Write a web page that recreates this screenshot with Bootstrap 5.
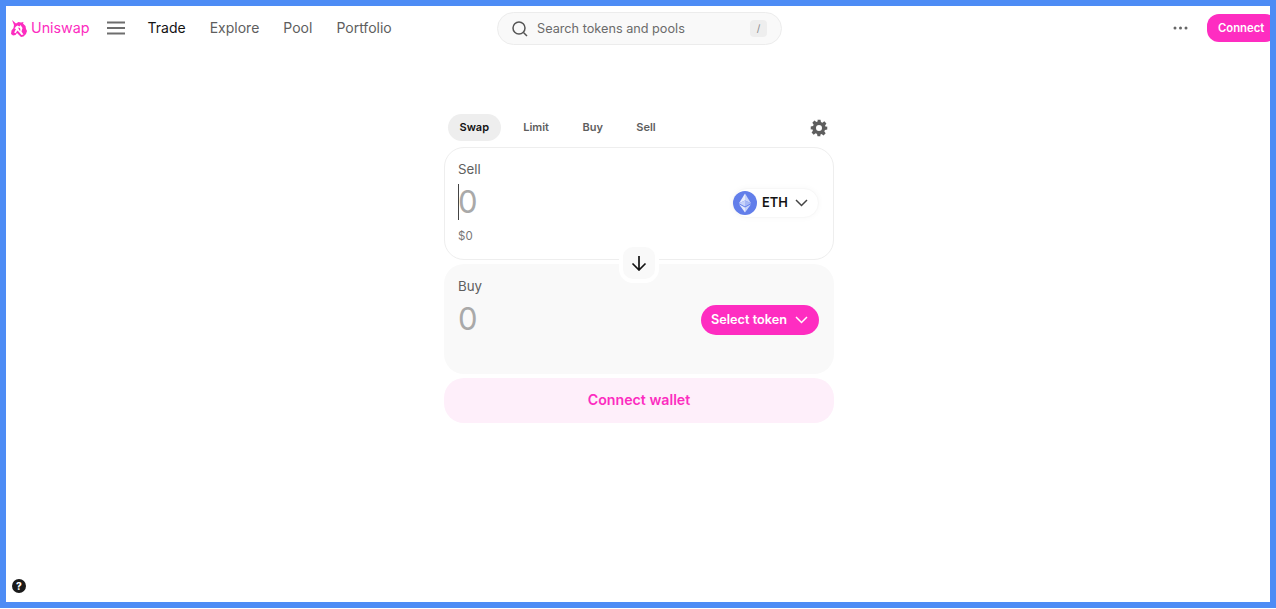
<!DOCTYPE html>
<html lang="en">
<head>
    <meta charset="UTF-8">
    <meta name="viewport" content="width=device-width, initial-scale=1.0">
    <title>Uniswap Interface</title>
    <link href="https://cdn.jsdelivr.net/npm/bootstrap@5.3.2/dist/css/bootstrap.min.css" rel="stylesheet">
    <style>
        html, body {
            height: 609px;
            overflow: hidden;
            background: #fff;
        }
        body {
            font-family: Inter, "Liberation Sans", sans-serif;
            color: #222;
        }
        .frame {
            position: relative;
            height: 608px;
            border: 6px solid #4d8cf5;
            overflow: hidden;
        }
        .top-bar {
            height: 44px;
            padding-left: 5px;
        }
        .brand-name {
            color: #fc2cc0;
            font-size: 14.3px;
            margin-left: 4px;
        }
        .menu-btn {
            margin-left: 17px;
            margin-right: 23px;
            width: 18px;
        }
        .top-links {
            gap: 24px;
            font-size: 14px;
            color: #5e5e5e;
            padding-bottom: 2px;
        }
        .top-links .active-link { color: #131313; }
        .search-box {
            position: absolute;
            left: 491px;
            top: 6px;
            width: 285px;
            height: 33px;
            padding: 0 14px;
            background: #f9f9f9;
            border: 1px solid #ececec;
            border-radius: 17px;
            font-size: 12.7px;
            color: #6b6b6b;
        }
        .search-label { margin-left: 9px; }
        .slash-key {
            width: 17px;
            height: 17px;
            background: #eeeeee;
            border-radius: 4px;
            font-size: 10px;
            color: #888;
        }
        .top-right { margin-left: auto; }
        .more-dots { margin-right: 19px; }
        .connect-top {
            width: 70px;
            height: 28px;
            margin-right: -7px;
            padding: 0 0 0 11px;
            background: #fe2dc1;
            border-radius: 12px;
            color: #fff;
            font-size: 11.3px;
            font-weight: 600;
        }
        .swap-col {
            width: 390px;
            margin: 64px auto 0;
            position: relative;
            left: 1px;
        }
        .tabs-row {
            height: 27px;
            padding: 0 6px 0 4px;
            margin-bottom: 6px;
            font-size: 11px;
            font-weight: 600;
            color: #5e5e5e;
        }
        .swap-tab {
            height: 27px;
            padding: 0 12px;
            border-radius: 14px;
            margin-right: 9.4px;
        }
        .swap-tab-on {
            padding: 0 11.5px;
            margin-right: 10.7px;
            background: #eeeeee;
            color: #131313;
        }
        .gear-icon { margin-left: auto; }
        .trade-panel {
            position: relative;
            border-radius: 20px;
            padding: 14px 15px 0 14px;
            font-size: 13.3px;
            color: #5e5e5e;
        }
        .sell-panel {
            height: 113px;
            border: 1px solid #eeeeee;
            background: #fff;
            margin-bottom: 4px;
            padding: 14px 14px 0 13px;
        }
        .buy-panel {
            height: 110px;
            background: #f9f9f9;
            padding-top: 15px;
        }
        .panel-label { line-height: 15px; }
        .amount-row { height: 36px; margin-top: 7px; }
        .buy-panel .amount-row { margin-top: 8px; }
        .amount-zero {
            font-size: 31px;
            line-height: 36px;
            font-weight: 400;
            color: #a9a9a9;
        }
        .buy-panel .amount-zero { margin-top: -2px; }
        .caret-line {
            width: 1px;
            height: 36px;
            background: #444;
            margin-right: -1px;
        }
        .usd-value {
            font-size: 11.5px;
            color: #777;
            margin-top: 9px;
            line-height: 14px;
        }
        .token-pill {
            height: 30px;
            width: 87px;
            margin-left: auto;
            margin-top: 2px;
            padding: 0 1px 0 0;
            background: #fff;
            border: 1px solid #f7f7f7;
            border-radius: 15px;
            box-shadow: 0 0 6px rgba(0, 0, 0, .03);
            color: #131313;
            font-size: 12.8px;
            font-weight: 600;
        }
        .token-name { margin: 0 7px 0 5px; }
        .select-pill {
            height: 30px;
            width: 118px;
            margin-left: auto;
            padding: 0 10px;
            background: #fe2dc1;
            border-radius: 15px;
            color: #fff;
            font-size: 12.7px;
            font-weight: 600;
        }
        .select-pill span { margin-right: 8px; }
        .flip-btn {
            position: absolute;
            left: 175px;
            top: 96px;
            width: 40px;
            height: 40px;
            background: #f9f9f9;
            border: 4px solid #fff;
            border-radius: 14px;
            z-index: 2;
        }
        .wallet-btn {
            height: 45px;
            margin-top: 4px;
            padding-bottom: 1px;
            background: #feeffa;
            border-radius: 20px;
            color: #fc2cc0;
            font-size: 14.2px;
            font-weight: 600;
        }
        .help-btn {
            position: absolute;
            left: 6px;
            bottom: 9px;
            width: 14px;
            height: 14px;
            background: #1a1a1a;
            border-radius: 50%;
            color: #fff;
            font-size: 10px;
            font-weight: 800;
            line-height: 14px;
        }
    </style>
</head>
<body>
    <div class="frame">
        <nav class="top-bar d-flex align-items-center">
            <svg width="16" height="17" viewBox="0 0 16 17">
                <path fill="#fc2cc0" d="M1 0 5 3.500 7.500 2 10 2.500 12.500 2 12 3.500 14.500 6 15 9 16 11 15 14 12.500 16.500 10 17 7.500 14.500 6 13 4.500 15 2 15.500 0 14 .5 10.500 2.500 8 3 5z"/>
                <path fill="#fff" d="M3.500 8.500 5 9 3.200 12.500 4.500 13.300 6.500 10.500 8 12 10.500 15 12.500 14.500 10.500 11.500 11.500 8 9.500 5 8.500 6.500 6.500 5.500 5 6.500z"/>
                <path fill="#fc2cc0" d="M7 7.500 9 8 9.500 10.500 8.500 10.500zM12.500 8 14 9.500 14 12.500 13 13.500z"/>
            </svg>
            <span class="brand-name">Uniswap</span>
            <svg class="menu-btn" height="14" viewBox="0 0 18 14" stroke="#6e6e6e" stroke-width="1.800">
                <path d="M0 1.500H18M0 7H18M0 12.500H18"/>
            </svg>
            <div class="top-links d-flex">
                <span class="active-link">Trade</span>
                <span>Explore</span>
                <span>Pool</span>
                <span>Portfolio</span>
            </div>
            <div class="search-box d-flex align-items-center">
                <svg width="16" height="16" viewBox="0 0 16 16" fill="none" stroke="#555" stroke-width="1.500">
                    <circle cx="7" cy="7" r="6"/>
                    <path d="M11.500 11.500 15 15"/>
                </svg>
                <span class="search-label">Search tokens and pools</span>
                <span class="slash-key d-flex align-items-center justify-content-center ms-auto">/</span>
            </div>
            <div class="top-right d-flex align-items-center">
                <svg class="more-dots" width="15" height="4" viewBox="0 0 15 4" fill="#666">
                    <circle cx="2" cy="2" r="1.500"/>
                    <circle cx="7.500" cy="2" r="1.500"/>
                    <circle cx="13" cy="2" r="1.500"/>
                </svg>
                <div class="connect-top d-flex align-items-center">Connect</div>
            </div>
        </nav>

        <main class="swap-col">
            <div class="tabs-row d-flex align-items-center">
                <span class="swap-tab swap-tab-on d-flex align-items-center">Swap</span>
                <span class="swap-tab d-flex align-items-center">Limit</span>
                <span class="swap-tab d-flex align-items-center">Buy</span>
                <span class="swap-tab d-flex align-items-center">Sell</span>
                <svg class="gear-icon" width="18" height="18" viewBox="0 0 24 24" fill="#5e5e5e">
                    <path fill-rule="evenodd" d="M10 1h4l.6 3.100 1.900.8 2.600-1.800 2.800 2.800-1.800 2.600.8 1.900L23 10v4l-3.100.6-.8 1.900 1.800 2.600-2.800 2.800-2.600-1.800-1.900.8L14 23h-4l-.6-3.100-1.900-.8-2.600 1.800-2.800-2.800 1.800-2.600-.8-1.900L1 14v-4l3.100-.6.8-1.900-1.800-2.600 2.800-2.800 2.600 1.800 1.900-.8zM12 8a4 4 0 1 0 0 8 4 4 0 0 0 0-8z"/>
                </svg>
            </div>

            <div class="position-relative">
                <section class="trade-panel sell-panel">
                    <div class="panel-label">Sell</div>
                    <div class="amount-row d-flex align-items-center">
                        <span class="caret-line"></span>
                        <span class="amount-zero">0</span>
                        <div class="token-pill d-flex align-items-center">
                            <svg width="24" height="24" viewBox="0 0 24 24">
                                <circle cx="12" cy="12" r="12" fill="#627eea"/>
                                <path d="M12 2.500v7l6 2.700z" fill="#c8d3fa"/>
                                <path d="M12 2.500 6 12.200l6-2.700z" fill="#e6ebfd"/>
                                <path d="M12 16.600V21.500l6-8.300z" fill="#c8d3fa"/>
                                <path d="M12 16.600 6 13.200l6 8.300z" fill="#e6ebfd"/>
                                <path d="M12 15.600l6-3.400-6-2.700z" fill="#a7b8f5"/>
                                <path d="M6 12.200l6 3.400V9.500z" fill="#c8d3fa"/>
                            </svg>
                            <span class="token-name">ETH</span>
                            <svg width="13" height="8" viewBox="0 0 13 8" fill="none" stroke="#444" stroke-width="1.500">
                                <path d="M1 1l5.500 5.500L12 1"/>
                            </svg>
                        </div>
                    </div>
                    <div class="usd-value">$0</div>
                </section>

                <div class="flip-btn d-flex align-items-center justify-content-center">
                    <svg width="16" height="16" viewBox="0 0 16 16" fill="none" stroke="#131313" stroke-width="1.700">
                        <path d="M8 1V15M1.500 8.500 8 15l6.500-6.500"/>
                    </svg>
                </div>

                <section class="trade-panel buy-panel">
                    <div class="panel-label">Buy</div>
                    <div class="amount-row d-flex align-items-center">
                        <span class="amount-zero">0</span>
                        <div class="select-pill d-flex align-items-center">
                            <span>Select token</span>
                            <svg width="13" height="8" viewBox="0 0 13 8" fill="none" stroke="#fff" stroke-width="1.500">
                                <path d="M1 1l5.500 5.500L12 1"/>
                            </svg>
                        </div>
                    </div>
                </section>
            </div>

            <div class="wallet-btn d-flex align-items-center justify-content-center">Connect wallet</div>
        </main>

        <div class="help-btn text-center">?</div>
    </div>
    <script src="https://cdn.jsdelivr.net/npm/bootstrap@5.3.2/dist/js/bootstrap.bundle.min.js"></script>
</body>
</html>
